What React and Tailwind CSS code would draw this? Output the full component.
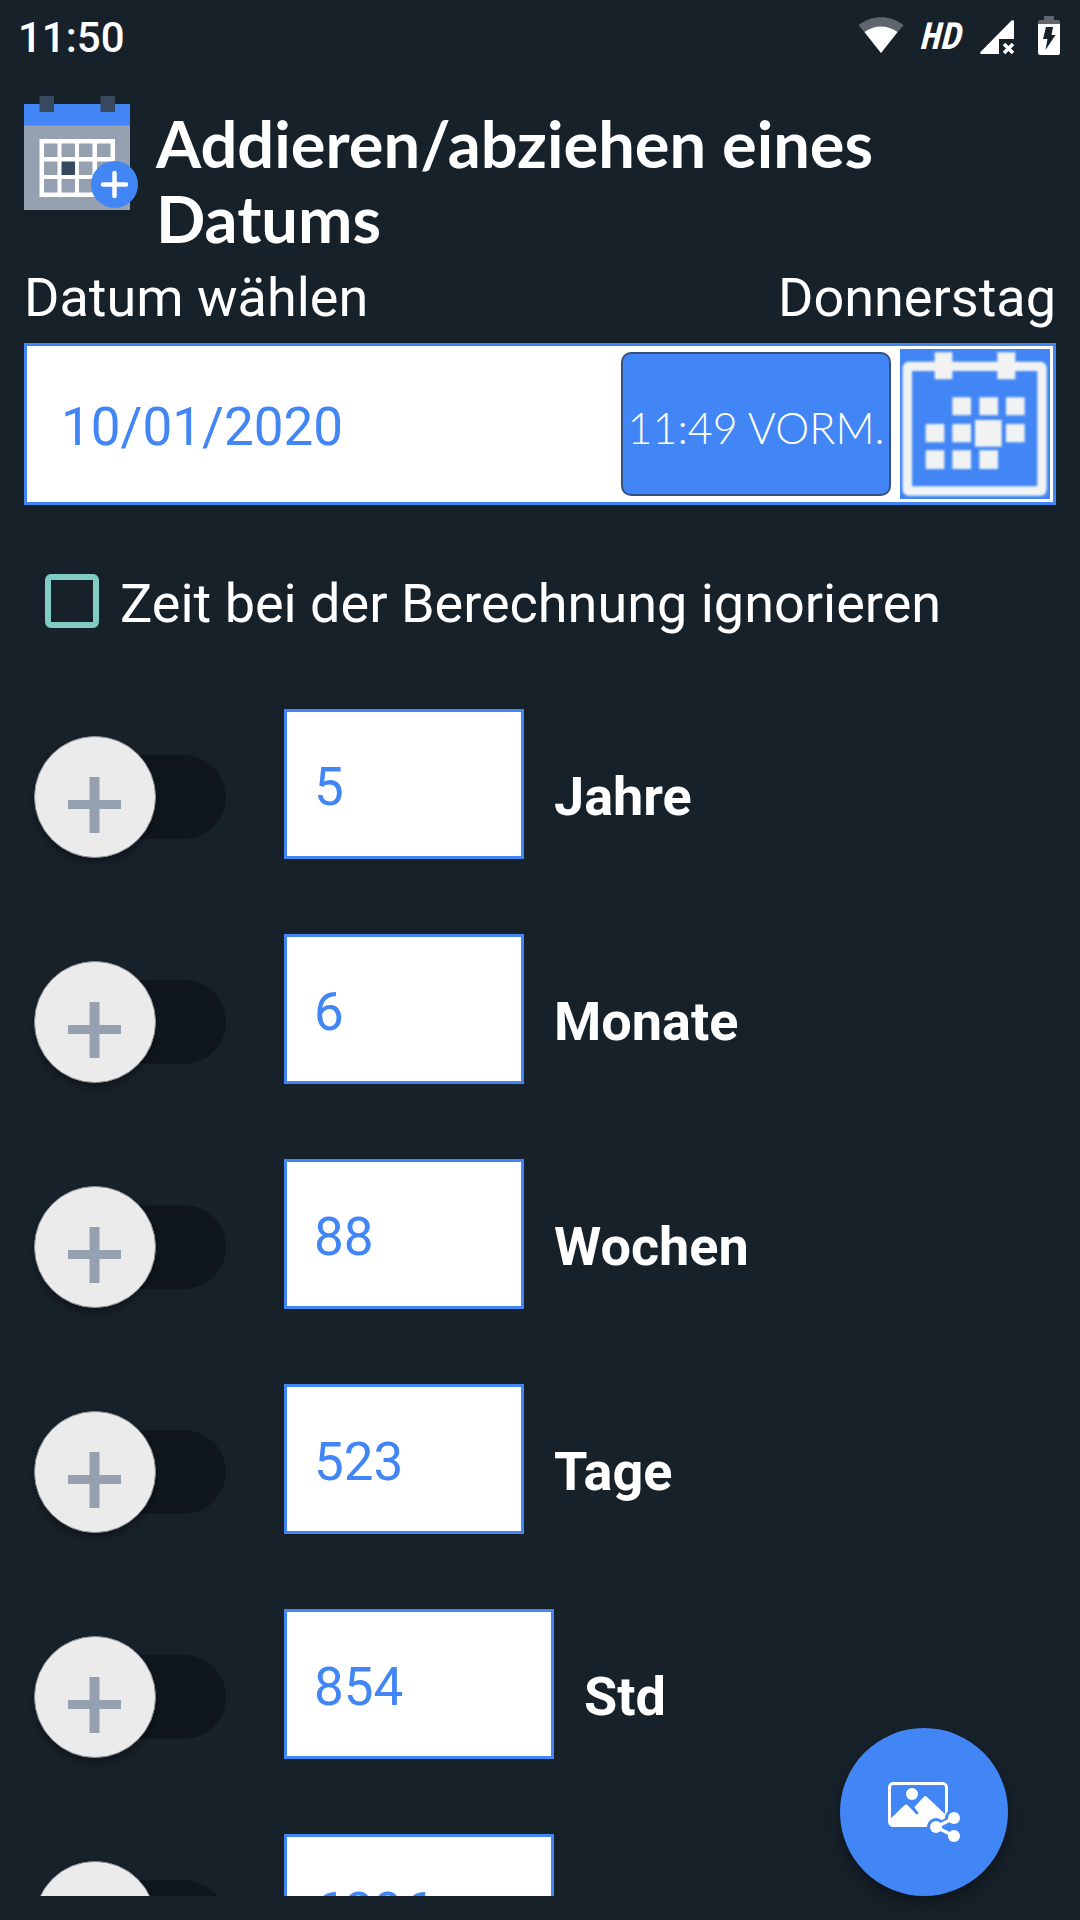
import React, { useState } from 'react';

const initialUnits = [
  { id: 'years', label: 'Jahre', value: '5' },
  { id: 'months', label: 'Monate', value: '6' },
  { id: 'weeks', label: 'Wochen', value: '88' },
  { id: 'days', label: 'Tage', value: '523' },
  { id: 'hours', label: 'Std', value: '854', wide: true },
  { id: 'minutes', label: '', name: 'Minuten', value: '6896', wide: true },
];

function StatusBar() {
  return (
    <div className="h-18 shrink-0 flex items-start justify-between pl-[18px] pr-5">
      <span className="pt-[13px] text-[42px] leading-[50px] font-medium">11:50</span>
      <div className="flex items-start">
        <svg className="mt-4 mr-3.5 w-[46px] h-[38px]" viewBox="0 0 46 38" aria-hidden="true">
          <path d="M0.500 9C14-1.500 32-1.500 45.500 9L23 37Z" fill="#5e656c" />
          <path d="M6.500 16C16 8.500 30 8.500 39.500 16L23 37Z" fill="#fff" />
        </svg>
        <span className="mr-5 pt-[15px] text-[37px] leading-10 font-bold italic font-['Open_Sans_Condensed','Roboto_Condensed','Roboto',sans-serif]">HD</span>
        <svg className="mt-5 mr-6 w-[34px] h-[34px]" viewBox="0 0 34 34" aria-hidden="true">
          <path d="M34 1.500V19H19V34H1.500Q-0.500 34 0.500 32L31.500 0.500Q34-0.500 34 1.500Z" fill="#fff" />
          <path d="M24 24L33 33M33 24L24 33" stroke="#fff" strokeWidth="3.500" />
        </svg>
        <svg className="mt-4 w-[22px] h-[39px]" viewBox="0 0 22 39" aria-hidden="true">
          <path d="M6 0H16V4H20.500Q22 4 22 5.500V8H0V5.500Q0 4 1.500 4H6Z" fill="#5e656c" />
          <path d="M0 8H22V37Q22 39 20 39H2Q0 39 0 37Z" fill="#fff" />
          <path d="M8 11H15L13.500 19H17.500L7.500 34L9.500 23H5Z" fill="#17212a" />
        </svg>
      </div>
    </div>
  );
}

function CalendarAddIcon() {
  return (
    <svg className="shrink-0 w-[114px] h-[114px]" viewBox="24 96 114 114" aria-hidden="true">
      <path fill="#95a1b0" d="M24 125H130V210H24Z" />
      <path fill="#4286f5" d="M24 104H130V125.500H24Z" />
      <path fill="#37495e" d="M39.500 96H54V112H39.500ZM100.500 96H115V112H100.500Z" />
      <path fill="#fff" d="M39.500 139H115V197H39.500Z" />
      {[143.5, 161.5, 179].map((y) =>
        [44, 61.5, 79, 97].map((x) => (
          <rect
            key={`${x}-${y}`}
            x={x}
            y={y}
            width="13.500"
            height="13.500"
            fill={x === 61.5 && y === 161.5 ? '#37495e' : '#95a1b0'}
          />
        ))
      )}
      <circle cx="114.500" cy="184.500" r="23.500" fill="#4286f5" />
      <path d="M103 184.500H126M114.500 173V196" stroke="#fff" strokeWidth="4.500" strokeLinecap="round" />
    </svg>
  );
}

function PickDateIcon() {
  return (
    <svg className="w-full h-full blur-[1px]" viewBox="900 57 450 450" aria-hidden="true">
      <g fill="#f1f3f3">
        <rect x="922" y="109" width="404" height="374" rx="4" fill="none" stroke="#f1f3f3" strokeWidth="28" />
        <path d="M1004 67h53v81h-53zM1192 67h54v81h-54z" />
        <path d="M1057 202h56v54h-56zM1138 202h56v54h-56zM1218 202h56v54h-56z" />
        <path d="M977 282h56v55h-56zM1057 282h56v55h-56zM1125 270h80v80h-80zM1218 282h56v55h-56z" />
        <path d="M977 361h56v56h-56zM1057 361h56v56h-56zM1138 361h56v56h-56z" />
      </g>
    </svg>
  );
}

function ShareImageIcon() {
  return (
    <svg className="w-[72px] h-[60px]" viewBox="264 246 216 180" aria-hidden="true">
      <rect x="268.500" y="250.500" width="171" height="126" rx="11" fill="none" stroke="#fff" strokeWidth="9" />
      <circle cx="336" cy="282" r="18" fill="#fff" />
      <path fill="#fff" d="M270 358L313 316Q318 311 323 316L346 340Q352 346 356 339L343 322L371 291Q376 285 381 291L438 345V378H270Z" />
      <g stroke="#4286f5" fill="#4286f5">
        <path d="M462 354L408 381L462 408" fill="none" strokeWidth="22" />
        <circle cx="462" cy="354" r="27" stroke="none" />
        <circle cx="408" cy="381" r="27" stroke="none" />
      </g>
      <path d="M462 354L408 381L462 408" fill="none" stroke="#fff" strokeWidth="10" />
      <circle cx="462" cy="354" r="18" fill="#fff" />
      <circle cx="408" cy="381" r="18" fill="#fff" />
      <circle cx="462" cy="408" r="18" fill="#fff" />
    </svg>
  );
}

function SignSwitch({ label }) {
  return (
    <label className="relative shrink-0 mt-[27px] w-[192px] h-[122px] flex items-center cursor-pointer">
      <input type="checkbox" role="switch" aria-label={`${label} abziehen`} className="peer sr-only" />
      <span className="ml-5 w-full h-[84px] rounded-full bg-[#0f161d]" />
      <span className="absolute left-0 top-0 size-[122px] rounded-full bg-[#ebebeb] border border-[#8b8f93] shadow-[0_5px_6px_rgba(0,0,0,0.3)] flex items-center justify-center peer-checked:left-[70px]">
        <svg className="mt-4 mr-0.5 w-[53px] h-[56px]" viewBox="0 0 53 56" aria-hidden="true">
          <path d="M0 27.500H53" stroke="#95a1b0" strokeWidth="9" />
          <path d="M26.500 0V56" stroke="#95a1b0" strokeWidth="10" />
        </svg>
      </span>
    </label>
  );
}

function UnitRow({ unit, onChange }) {
  const name = unit.label || unit.name;

  return (
    <div className="flex items-start">
      <SignSwitch label={name} />
      <input
        id={unit.id}
        type="text"
        inputMode="numeric"
        aria-label={name}
        value={unit.value}
        onChange={(e) => onChange(unit.id, e.target.value)}
        className={`ml-[58px] h-[150px] shrink-0 rounded-none border-3 border-[#4286f5] bg-white px-[27px] pt-1.5 text-[53px] text-[#4286f5] outline-none ${
          unit.wide ? 'w-[270px]' : 'w-[240px]'
        }`}
      />
      {unit.label && (
        <label htmlFor={unit.id} className="ml-[30px] mt-14 text-[54px] leading-[64px] font-bold">
          {unit.label}
        </label>
      )}
    </div>
  );
}

export default function App() {
  const [date, setDate] = useState('10/01/2020');
  const [ignoreTime, setIgnoreTime] = useState(false);
  const [units, setUnits] = useState(initialUnits);

  const updateUnit = (id, value) => {
    setUnits((prev) => prev.map((u) => (u.id === id ? { ...u, value } : u)));
  };

  return (
    <div className="relative h-screen flex flex-col pb-6 bg-[#17212a] text-white font-['Roboto',sans-serif]">
      <StatusBar />
      <main className="flex-1 min-h-0 overflow-hidden">
        <header className="flex items-start pt-6 px-6">
          <CalendarAddIcon />
          <h1 className="ml-[18px] mt-2.5 mb-1 max-w-[800px] text-[65px] leading-[75px] font-bold font-['Lato',sans-serif]">
            Addieren/abziehen eines Datums
          </h1>
        </header>

        <section className="px-6 mt-1.5">
          <div className="flex justify-between text-[54px] leading-[64px]">
            <label htmlFor="date">Datum wählen</label>
            <span>Donnerstag</span>
          </div>
          <div className="mt-[13px] h-[162px] flex items-center border-3 border-[#4286f5] bg-white p-[3px]">
            <input
              id="date"
              type="text"
              value={date}
              onChange={(e) => setDate(e.target.value)}
              className="flex-1 min-w-0 h-full bg-transparent pl-[31px] pt-1.5 text-[53px] text-[#4286f5] outline-none"
            />
            <button
              type="button"
              className="shrink-0 w-[270px] h-36 pt-1.5 rounded-[10px] border-2 border-[#34517f] bg-[#4286f5] text-[43px] leading-none font-light whitespace-nowrap font-['Lato',sans-serif]"
            >
              11:49 VORM.
            </button>
            <button type="button" aria-label="Datum wählen" className="ml-[9px] shrink-0 size-[150px] bg-[#4286f5] overflow-hidden">
              <PickDateIcon />
            </button>
          </div>
        </section>

        <div className="mt-[67px] ml-[45px] flex items-start">
          <input
            id="ignore-time"
            type="checkbox"
            checked={ignoreTime}
            onChange={(e) => setIgnoreTime(e.target.checked)}
            className="appearance-none shrink-0 mt-0.5 size-[54px] rounded-md border-6 border-[#80cbc4] checked:bg-[#80cbc4]"
          />
          <label htmlFor="ignore-time" className="ml-[21px] text-[54px] leading-[64px]">
            Zeit bei der Berechnung ignorieren
          </label>
        </div>

        <section className="mt-[73px] pl-[34px] flex flex-col gap-[75px]">
          {units.map((unit) => (
            <UnitRow key={unit.id} unit={unit} onChange={updateUnit} />
          ))}
        </section>
      </main>

      <button
        type="button"
        aria-label="Bild teilen"
        className="absolute right-18 bottom-6 size-[168px] rounded-full bg-[#4286f5] shadow-[0_8px_16px_rgba(0,0,0,0.35)] flex items-center justify-center"
      >
        <ShareImageIcon />
      </button>
    </div>
  );
}
